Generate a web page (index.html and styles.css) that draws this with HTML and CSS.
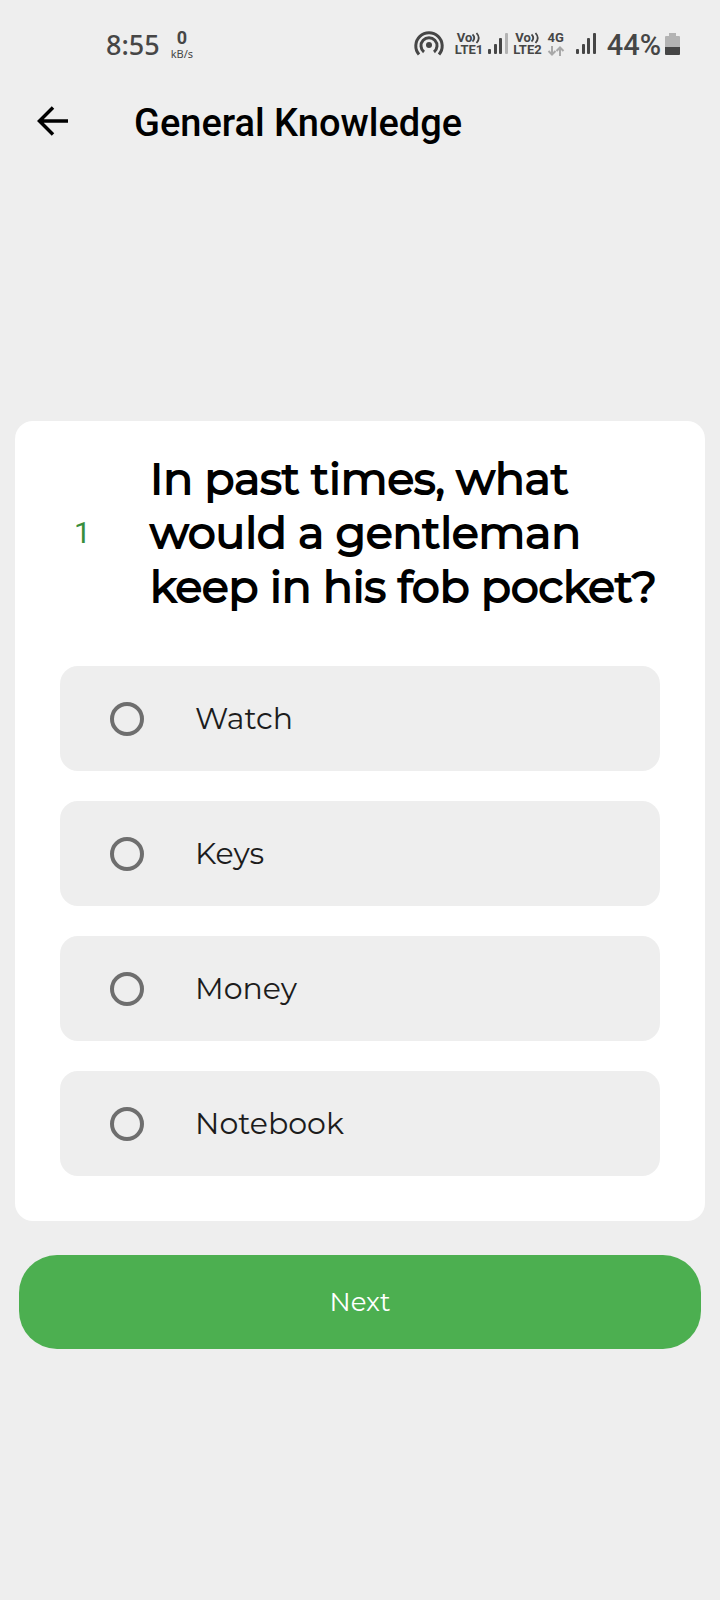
FILE: index.html
```html
<!DOCTYPE html>
<html lang="en">
<head>
<meta charset="utf-8">
<meta name="viewport" content="width=device-width, initial-scale=1">
<title>General Knowledge</title>
<link rel="stylesheet" href="styles.css">
</head>
<body>
<div class="screen">
  <div class="status">
    <div class="status-left">
      <span class="time">8:55</span>
      <span class="speed"><b class="speed-value">0</b><span class="speed-unit">kB/s</span></span>
    </div>
    <div class="status-right">
      <svg class="hotspot" width="30" height="26" viewBox="0 0 30 26" fill="none" stroke="#464646" stroke-width="3">
        <circle cx="15" cy="14" r="3" fill="#464646" stroke="none"/>
        <path d="M10 21A8 8 0 1 1 20 21"/>
        <path d="M5 23.500A13.200 13.200 0 1 1 25 23.500"/>
      </svg>
      <div class="sims">
        <span class="volte"><span>Vo<svg width="9" height="12" viewBox="0 0 9 12" fill="none" stroke="#464646" stroke-width="1.800"><path d="M.5 2.500Q4 6 .5 9.500M4.500 1Q9 6 4.500 11"/></svg></span><span>LTE1</span></span>
        <svg width="20" height="22" viewBox="0 0 20 22" fill="#464646"><rect x="0" y="16" width="3" height="5" rx="1"/><rect x="6" y="11" width="3" height="10" rx="1"/><rect x="11" y="5" width="3" height="16" rx="1"/><rect x="17" y="0" width="3" height="21" rx="1" fill="#b3b3b3"/></svg>
        <span class="volte"><span>Vo<svg width="9" height="12" viewBox="0 0 9 12" fill="none" stroke="#464646" stroke-width="1.800"><path d="M.5 2.500Q4 6 .5 9.500M4.500 1Q9 6 4.500 11"/></svg></span><span>LTE2</span></span>
        <span class="network">4G<svg width="18" height="10" viewBox="0 0 18 10" fill="none" stroke="#a8a8a8" stroke-width="2"><path d="M5 0V8.500M1.500 5L5 8.500L8.500 5M13 10V1.500M9.500 5L13 1.500L16.500 5"/></svg></span>
      </div>
      <svg width="20" height="22" viewBox="0 0 20 22" fill="#464646"><rect x="0" y="16" width="3" height="5" rx="1"/><rect x="6" y="11" width="3" height="10" rx="1"/><rect x="11" y="5" width="3" height="16" rx="1"/><rect x="17" y="0" width="3" height="21" rx="1"/></svg>
      <div class="battery">
        <span class="percent">44%</span>
        <svg width="15" height="22" viewBox="0 0 15 22"><path fill="#b3b3b3" d="M4 0h7v3h3a1 1 0 0 1 1 1v10H0V4a1 1 0 0 1 1-1h3z"/><path fill="#464646" d="M0 14h15v7a1 1 0 0 1-1 1H1a1 1 0 0 1-1-1z"/></svg>
      </div>
    </div>
  </div>
  <header class="bar">
    <button class="back" type="button" aria-label="Back">
      <svg width="32" height="30" viewBox="0 0 32 30" fill="none" stroke="#000" stroke-width="3.500"><path d="M31 15H3M16 1.500L2.500 15L16 28.500"/></svg>
    </button>
    <h1 class="title">General Knowledge</h1>
  </header>
  <main class="quiz">
    <form class="form">
      <fieldset class="card" aria-labelledby="question">
        <div class="prompt">
          <span class="number">1</span>
          <h2 class="question" id="question">In past times, what would a gentleman keep in his fob pocket?</h2>
        </div>
        <div class="options">
          <label class="option"><input class="radio" type="radio" name="answer" value="watch"><span>Watch</span></label>
          <label class="option"><input class="radio" type="radio" name="answer" value="keys"><span>Keys</span></label>
          <label class="option"><input class="radio" type="radio" name="answer" value="money"><span>Money</span></label>
          <label class="option"><input class="radio" type="radio" name="answer" value="notebook"><span>Notebook</span></label>
        </div>
      </fieldset>
      <button class="next" type="button">Next</button>
    </form>
  </main>
</div>
</body>
</html>
```
FILE: styles.css
```css
* { box-sizing: border-box; }
body {
  margin: 0;
  background: #eee;
  color: #1c1c1c;
  font-family: Montserrat, Inter, sans-serif;
}
.screen {
  display: flex;
  flex-direction: column;
  min-height: 100vh;
}
.status {
  display: flex;
  justify-content: space-between;
  align-items: center;
  height: 80px;
  padding: 8px 40px 0 106px;
  color: #464646;
  font-family: Roboto, sans-serif;
}
.status svg { display: block; flex: none; }
.status-left, .status-right, .sims, .battery {
  display: flex;
  align-items: center;
}
.status-left { gap: 11px; }
.status-right { gap: 11px; }
.sims { gap: 5px; }
.battery { gap: 4px; }
.time {
  padding-top: 2px;
  font: 500 27px/32px "Noto Sans", sans-serif;
}
.speed {
  display: flex;
  flex-direction: column;
  align-items: center;
  padding-top: 2px;
}
.speed-value { font-size: 18px; line-height: 18px; }
.speed-unit { font: 11px/14px "Noto Sans", sans-serif; }
.volte, .network {
  display: flex;
  flex-direction: column;
  align-items: center;
  font-weight: 700;
  font-size: 13px;
  line-height: 12px;
}
.volte > span { display: flex; align-items: center; }
.network { gap: 2px; }
.percent { padding-top: 2px; font-size: 29px; font-weight: 500; line-height: 32px; }
.bar {
  display: flex;
  align-items: center;
  gap: 65px;
  height: 90px;
  padding: 0 37px 8px;
}
.back {
  display: flex;
  padding: 0;
  border: 0;
  background: none;
}
.title {
  margin: 0;
  padding-top: 4px;
  color: #000;
  font: 500 38px/48px Roboto, sans-serif;
}
.quiz {
  flex: 1;
  display: flex;
  flex-direction: column;
  justify-content: center;
}
.form {
  display: flex;
  flex-direction: column;
  gap: 34px;
}
.card {
  min-width: 0;
  margin: 0 15px;
  padding: 30px 45px 45px;
  border: 0;
  border-radius: 18px;
  background: #fff;
}
.prompt {
  display: flex;
  align-items: center;
  margin-bottom: 53px;
}
.number {
  flex: none;
  width: 45px;
  margin-right: 45px;
  text-align: center;
  color: #388e3c;
  font-family: Roboto, sans-serif;
  font-size: 30px;
}
.question {
  flex: 1;
  margin: 0 -15px 0 0;
  color: #000;
  font-size: 44px;
  font-weight: 400;
  line-height: 54px;
  -webkit-text-stroke: 2px;
}
.options { display: grid; gap: 30px; }
.option {
  display: flex;
  align-items: center;
  gap: 51px;
  height: 105px;
  padding: 0 50px;
  border-radius: 18px;
  background: #eee;
  font-size: 30px;
  line-height: 36px;
}
.radio {
  appearance: none;
  flex: none;
  width: 34px;
  height: 34px;
  margin: 0;
  border: 4px solid #6e6e6e;
  border-radius: 50%;
}
.radio:checked {
  border-color: #4caf50;
  background: radial-gradient(#4caf50 45%, transparent 50%);
}
.next {
  height: 94px;
  margin: 0 19px;
  padding: 0;
  border: 0;
  border-radius: 38px;
  background: #4caf50;
  color: #fff;
  font-family: inherit;
  font-size: 26px;
}
```
